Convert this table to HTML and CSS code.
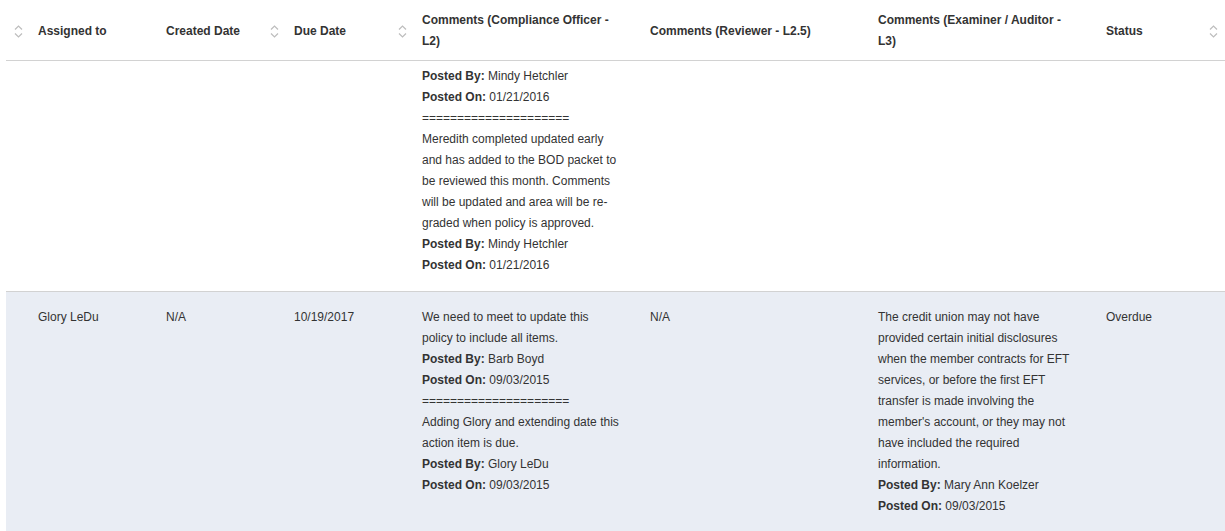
FILE: index.html
```html
<!DOCTYPE html>
<html>
<head>
<meta charset="utf-8">
<link rel="stylesheet" href="styles.css">
</head>
<body>
<div class="wrap">
<table class="grid">
  <colgroup>
    <col class="c-ctl"><col class="c-sm"><col class="c-sm"><col class="c-sm">
    <col class="c-lg"><col class="c-lg"><col class="c-lg"><col class="c-st">
  </colgroup>
  <thead>
    <tr>
      <th class="th-ctl"><div class="hcell"><span></span><svg class="sort" width="9" height="15" viewBox="0 0 9 15"><polyline points="1,5.5 4.5,2 8,5.5"/><polyline points="1,9.5 4.5,13 8,9.5"/></svg></div></th>
      <th><div class="hcell"><span>Assigned to</span></div></th>
      <th><div class="hcell"><span>Created Date</span><svg class="sort" width="9" height="15" viewBox="0 0 9 15"><polyline points="1,5.5 4.5,2 8,5.5"/><polyline points="1,9.5 4.5,13 8,9.5"/></svg></div></th>
      <th><div class="hcell"><span>Due Date</span><svg class="sort" width="9" height="15" viewBox="0 0 9 15"><polyline points="1,5.5 4.5,2 8,5.5"/><polyline points="1,9.5 4.5,13 8,9.5"/></svg></div></th>
      <th class="th-wide"><div class="hcell"><span>Comments (Compliance Officer - L2)</span></div></th>
      <th class="th-wide"><div class="hcell"><span>Comments (Reviewer - L2.5)</span></div></th>
      <th class="th-wide"><div class="hcell"><span>Comments (Examiner / Auditor - L3)</span></div></th>
      <th><div class="hcell"><span>Status</span><svg class="sort" width="9" height="15" viewBox="0 0 9 15"><polyline points="1,5.5 4.5,2 8,5.5"/><polyline points="1,9.5 4.5,13 8,9.5"/></svg></div></th>
    </tr>
  </thead>
  <tbody>
    <tr class="row-cont">
      <td></td><td></td><td></td><td></td>
      <td class="txt"><b>Posted By:</b> Mindy Hetchler<br><b>Posted On:</b> 01/21/2016<br>=====================<br>Meredith completed updated early and has added to the BOD packet to be reviewed this month. Comments will be updated and area will be re-graded when policy is approved.<br><b>Posted By:</b> Mindy Hetchler<br><b>Posted On:</b> 01/21/2016</td>
      <td></td><td></td><td></td>
    </tr>
    <tr class="row-alt">
      <td></td>
      <td>Glory LeDu</td>
      <td>N/A</td>
      <td>10/19/2017</td>
      <td class="txt">We need to meet to update this policy to include all items.<br><b>Posted By:</b> Barb Boyd<br><b>Posted On:</b> 09/03/2015<br>=====================<br>Adding Glory and extending date this action item is due.<br><b>Posted By:</b> Glory LeDu<br><b>Posted On:</b> 09/03/2015</td>
      <td class="txt">N/A</td>
      <td class="txt">The credit union may not have provided certain initial disclosures when the member contracts for EFT services, or before the first EFT transfer is made involving the member's account, or they may not have included the required information.<br><b>Posted By:</b> Mary Ann Koelzer<br><b>Posted On:</b> 09/03/2015</td>
      <td>Overdue</td>
    </tr>
  </tbody>
</table>
</div>
</body>
</html>
```

FILE: styles.css
```css
html, body {
  margin: 0;
  padding: 0;
  background: #ffffff;
}
.wrap {
  padding-left: 6px;
  overflow: hidden;
}
.grid {
  table-layout: fixed;
  width: 1219px;
  border-collapse: separate;
  border-spacing: 0;
  font-family: "Liberation Sans", Arial, sans-serif;
  font-size: 12px;
  line-height: 21px;
  color: #333333;
}
.c-ctl { width: 24px; }
.c-sm { width: 128px; }
.c-lg { width: 228px; }
.c-st { width: 127px; }

th {
  font-weight: bold;
  text-align: left;
  vertical-align: middle;
  padding: 10px 7px 8px 8px;
  border-bottom: 1px solid #d2d2d2;
  color: #333333;
}
th.th-ctl { padding-left: 0; }
th.th-wide { padding-right: 26px; }
.hcell {
  display: flex;
  align-items: center;
  justify-content: space-between;
}
.sort {
  flex: none;
  fill: none;
  stroke: #bdbdbd;
  stroke-width: 1.2;
}
td {
  vertical-align: top;
  padding: 15px 8px 15px 8px;
  border-bottom: 1px solid #d2d2d2;
}
td.txt { padding-right: 20px; }
.row-cont td { padding-top: 5px; }
.row-alt td { background: #e9edf4; }
b { font-weight: bold; }
```
